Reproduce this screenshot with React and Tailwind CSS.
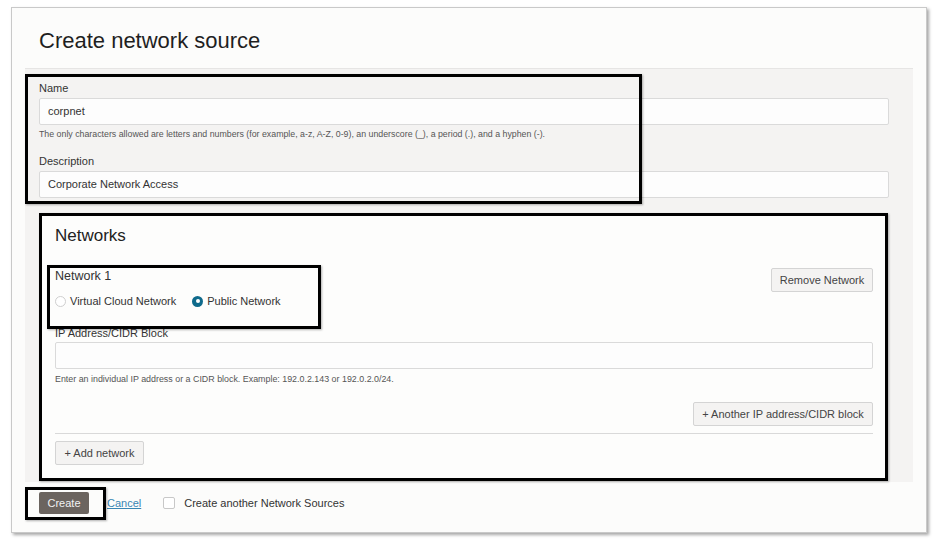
import React from "react";

const font = { fontFamily: '"Liberation Sans", Arial, sans-serif' };

function Radio({ checked, label }) {
  return (
    <div className="flex items-center">
      {checked ? (
        <span className="w-[11px] h-[11px] rounded-full bg-[#0f6a8b] flex items-center justify-center">
          <span className="w-[4px] h-[4px] rounded-full bg-white" />
        </span>
      ) : (
        <span className="w-[11px] h-[11px] rounded-full border border-[#cfcfcf] bg-white" />
      )}
      <span className="ml-[4px] text-[11px] leading-[14px] text-[#333]">{label}</span>
    </div>
  );
}

function Btn({ children, className = "" }) {
  return (
    <button
      className={
        "h-[24px] px-[7px] whitespace-nowrap border border-[#d4d4d4] rounded-[2px] bg-[#f4f3f2] text-[11px] leading-[14px] text-[#444] " +
        className
      }
    >
      {children}
    </button>
  );
}

export default function App() {
  return (
    <div className="relative w-[939px] h-[548px] bg-white overflow-hidden" style={font}>
      <div className="ml-[11px] mt-[7px] w-[916px] h-[526px] border border-[#c9c9c9] bg-[#fcfcfb] shadow-[2px_2px_3px_rgba(0,0,0,0.35)] flex flex-col">
        {/* header */}
        <div className="h-[60px] pl-[27px] pt-[20px]">
          <h1 className="text-[22px] leading-[25px] text-[#1f1f1f] font-normal">Create network source</h1>
        </div>

        {/* gray panel */}
        <div className="mx-[13px] bg-[#f4f3f2] border-t border-[#e6e5e4] pl-[14px] pr-[24px] pt-[12px] pb-[1px] flex flex-col">
          <label className="text-[11px] leading-[14px] text-[#333]">Name</label>
          <div className="mt-[3px] h-[27px] border border-[#dadada] rounded-[2px] bg-[#fdfdfd] flex items-center pl-[8px] text-[11px] text-[#333]">
            corpnet
          </div>
          <p className="mt-[3px] text-[8.8px] leading-[12px] text-[#555]">
            The only characters allowed are letters and numbers (for example, a-z, A-Z, 0-9), an underscore (_), a period (.), and a hyphen (-).
          </p>
          <label className="mt-[14px] text-[11px] leading-[14px] text-[#333]">Description</label>
          <div className="mt-[3px] h-[27px] border border-[#dadada] rounded-[2px] bg-[#fdfdfd] flex items-center pl-[8px] text-[11px] text-[#333]">
            Corporate Network Access
          </div>

          {/* networks card */}
          <div className="mt-[15px] mr-[1px] border-[3px] border-black bg-[#fdfdfc] shadow-[1px_1px_2px_rgba(0,0,0,0.3)] pl-[13px] pr-[12px] pt-[10px] pb-[13px] flex flex-col">
            <h2 className="text-[17px] leading-[20px] text-[#222] font-normal">Networks</h2>
            <div className="mt-[22px] flex justify-between items-start">
              <div className="flex flex-col">
                <div className="text-[12.5px] leading-[16px] text-[#333]">Network 1</div>
                <div className="mt-[10px] flex items-center gap-[16px]">
                  <Radio label="Virtual Cloud Network" />
                  <Radio checked label="Public Network" />
                </div>
              </div>
              <Btn className="w-[102px] text-[#5a5a5a]">Remove Network</Btn>
            </div>
            <label className="mt-[18px] text-[11px] leading-[14px] text-[#333]">IP Address/CIDR Block</label>
            <div className="mt-[2px] h-[27px] border border-[#dadada] rounded-[2px] bg-[#fdfdfd]" />
            <p className="mt-[4px] text-[8.9px] leading-[12px] text-[#555]">
              Enter an individual IP address or a CIDR block. Example: 192.0.2.143 or 192.0.2.0/24.
            </p>
            <div className="mt-[17px] flex justify-end">
              <Btn className="h-[23px] w-[180px] text-[#333]">+ Another IP address/CIDR block</Btn>
            </div>
            <div className="mt-[7px] h-px bg-[#d9d9d9]" />
            <div className="mt-[7px] flex">
              <Btn className="h-[23px] w-[89px] text-[#333]">+ Add network</Btn>
            </div>
          </div>
        </div>

        {/* footer */}
        <div className="pl-[27px] pt-[10px] flex items-center">
          <button className="w-[50px] h-[22px] rounded-[2px] bg-[#6b645f] text-[11px] text-[#f2f2f2]">Create</button>
          <a className="ml-[18px] text-[11px] text-[#3a86b4] underline">Cancel</a>
          <span className="ml-[22px] w-[12px] h-[12px] rounded-[2px] border border-[#c8c8c8] bg-white" />
          <span className="ml-[9px] text-[11px] text-[#333]">Create another Network Sources</span>
        </div>
      </div>

      {/* annotation boxes */}
      <div className="absolute left-[25px] top-[74px] w-[617px] h-[130px] border-[3px] border-black shadow-[1px_1px_2px_rgba(0,0,0,0.3)]" />
      <div className="absolute left-[47px] top-[265px] w-[274px] h-[64px] border-[3px] border-black shadow-[1px_1px_2px_rgba(0,0,0,0.3)]" />
      <div className="absolute left-[25px] top-[487px] w-[81px] h-[33px] border-[3px] border-black shadow-[1px_1px_2px_rgba(0,0,0,0.3)]" />
    </div>
  );
}
